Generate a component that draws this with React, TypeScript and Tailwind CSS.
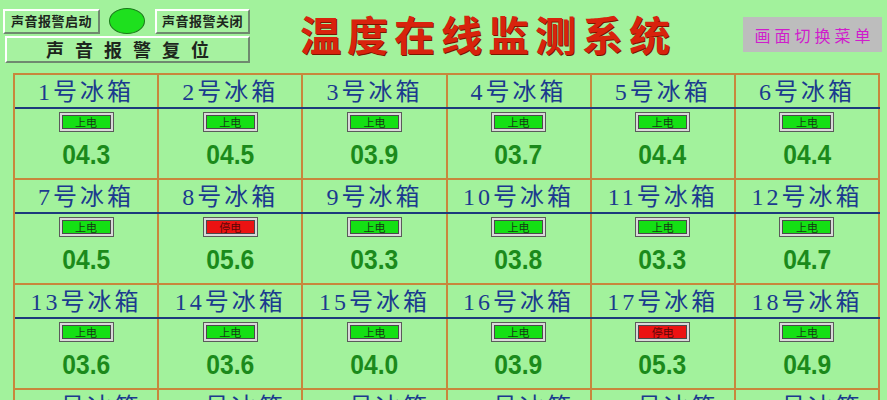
import React from 'react'

type Box = { no: number; on: boolean; temp: string }

const boxes: Box[] = [
  { no: 1, on: true, temp: '04.3' },
  { no: 2, on: true, temp: '04.5' },
  { no: 3, on: true, temp: '03.9' },
  { no: 4, on: true, temp: '03.7' },
  { no: 5, on: true, temp: '04.4' },
  { no: 6, on: true, temp: '04.4' },
  { no: 7, on: true, temp: '04.5' },
  { no: 8, on: false, temp: '05.6' },
  { no: 9, on: true, temp: '03.3' },
  { no: 10, on: true, temp: '03.8' },
  { no: 11, on: true, temp: '03.3' },
  { no: 12, on: true, temp: '04.7' },
  { no: 13, on: true, temp: '03.6' },
  { no: 14, on: true, temp: '03.6' },
  { no: 15, on: true, temp: '04.0' },
  { no: 16, on: true, temp: '03.9' },
  { no: 17, on: false, temp: '05.3' },
  { no: 18, on: true, temp: '04.9' },
  { no: 19, on: true, temp: '04.2' },
  { no: 20, on: true, temp: '04.1' },
  { no: 21, on: true, temp: '03.8' },
  { no: 22, on: true, temp: '04.0' },
  { no: 23, on: true, temp: '03.7' },
  { no: 24, on: true, temp: '04.3' },
]

// 凸起的按钮
const BevelButton = ({ children, className }: { children: React.ReactNode; className: string }) => (
  <div
    className={`flex items-center justify-center border-2 border-t-white border-l-white border-r-[#6f8a6f] border-b-[#6f8a6f] bg-[#a6f2a0] font-['Noto_Sans_CJK_SC',sans-serif] font-bold text-[#1d261d] ${className}`}
  >
    {children}
  </div>
)

// 上电 / 停电 指示
const PowerBadge = ({ on }: { on: boolean }) => (
  <div className="border border-[#5a5a5a] bg-[#d9d9d9] p-[2px]">
    <div
      className={`flex h-[14px] w-[49px] items-center justify-center border border-[#4a4a4a] font-['Noto_Sans_CJK_SC',sans-serif] text-[11px] leading-none ${
        on ? 'bg-[#14e014] text-[#143a14]' : 'bg-[#ec1212] text-[#5a0808]'
      }`}
    >
      {on ? '上电' : '停电'}
    </div>
  </div>
)

const Cell = ({ box }: { box: Box }) => (
  <div className="flex h-[105px] flex-col items-center border-r-2 border-b-2 border-[#c8873c]">
    <div className="flex h-[32px] w-full items-center justify-center pt-[2px] font-['Liberation_Serif','Noto_Sans_CJK_SC',serif] text-[24px] leading-none tracking-[3px] text-[#1b3a8e]">
      {box.no}号冰箱
    </div>
    <div className="mr-[-2px] h-[2px] w-[calc(100%+2px)] self-start bg-[#1c3a7c]" />
    <div className="mt-[3px]">
      <PowerBadge on={box.on} />
    </div>
    <div className="mt-[9px] scale-x-[0.88] font-['Liberation_Sans',sans-serif] text-[28px] leading-none font-bold text-[#1b8a1b]">
      {box.temp}
    </div>
  </div>
)

export default function App() {
  return (
    <div className="h-[400px] w-[887px] overflow-hidden bg-[#a2f29c]">
      {/* 顶部 */}
      <div className="flex h-[73px]">
        <div className="w-[250px] pt-[8px] pl-[3px]">
          <div className="flex items-center">
            <BevelButton className="h-[25px] w-[97px] text-[13px] tracking-[0.5px]">声音报警启动</BevelButton>
            <div className="ml-[9px] h-[26px] w-[36px] rounded-[50%] border border-[#1a7a1a] bg-[#1ee01e]" />
            <BevelButton className="ml-[10px] h-[25px] w-[95px] text-[13px] tracking-[0.5px]">声音报警关闭</BevelButton>
          </div>
          <BevelButton className="mt-[2px] ml-[2px] h-[27px] w-[245px] text-[18px] tracking-[11px]">
            <span className="ml-[11px]">声音报警复位</span>
          </BevelButton>
        </div>

        <div className="mt-[13px] ml-[50px] font-['Noto_Sans_CJK_SC',sans-serif] text-[41px] leading-none font-bold tracking-[6px] text-[#d8230d] [text-shadow:1px_1px_0_#7a1600]">
          温度在线监测系统
        </div>

        <div className="mt-[17px] mr-[5px] ml-auto flex h-[35px] w-[139px] items-center justify-center bg-[#bdbdbd] font-['Noto_Sans_CJK_SC',sans-serif] text-[16px] tracking-[4px] text-[#d01ccc]">
          <span className="ml-[4px]">画面切换菜单</span>
        </div>
      </div>

      {/* 冰箱列表 */}
      <div className="ml-[13px] grid w-[867px] grid-cols-6 border-t-2 border-l-2 border-[#c8873c]">
        {boxes.map((b) => (
          <Cell key={b.no} box={b} />
        ))}
      </div>
    </div>
  )
}
